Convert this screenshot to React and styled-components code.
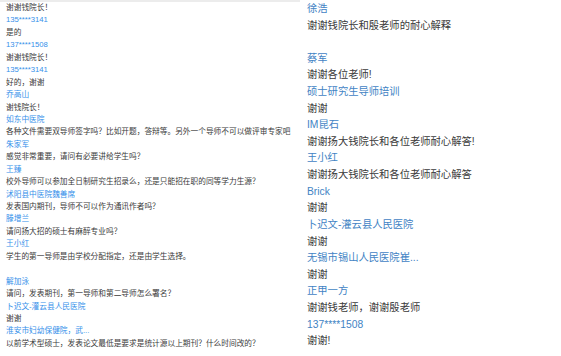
import React from "react"
import styled, { createGlobalStyle } from "styled-components"

const GlobalStyle = createGlobalStyle`
  html, body {
    margin: 0;
    padding: 0;
    background: #ffffff;
  }
  body {
    font-family: "Liberation Sans", "Noto Sans CJK SC", sans-serif;
  }
`

const Page = styled.div`
  display: flex;
  width: 561px;
  height: 356px;
  overflow: hidden;
`

const Column = styled.div`
  display: flex;
  flex-direction: column;
  box-sizing: border-box;
  width: ${(p) => p.$width};
  flex: ${(p) => (p.$width ? "none" : "1")};
  padding: ${(p) => p.$pad};
  border-top: ${(p) => (p.$bar ? "2px solid #ececec" : "none")};
  font-size: ${(p) => p.$size}px;
  line-height: ${(p) => p.$lh}px;
`

const Line = styled.div`
  white-space: nowrap;
  color: ${(p) => (p.$name ? p.$blue : "#3a3a3a")};
  height: ${(p) => p.$lh}px;
`

const Blank = styled.div`
  height: ${(p) => p.$h}px;
`

const left = [
  ["t", "谢谢钱院长！"],
  ["n", "135****3141"],
  ["t", "是的"],
  ["n", "137****1508"],
  ["t", "谢谢钱院长！"],
  ["n", "135****3141"],
  ["t", "好的，谢谢"],
  ["n", "乔高山"],
  ["t", "谢钱院长！"],
  ["n", "如东中医院"],
  ["t", "各种文件需要双导师签字吗？比如开题，答辩等。另外一个导师不可以做评审专家吧"],
  ["n", "朱家军"],
  ["t", "感觉非常重要，请问有必要讲给学生吗？"],
  ["n", "王臻"],
  ["t", "校外导师可以参加全日制研究生招录么，还是只能招在职的同等学力生源？"],
  ["n", "沭阳县中医院魏善席"],
  ["t", "发表国内期刊，导师不可以作为通讯作者吗？"],
  ["n", "滕增兰"],
  ["t", "请问扬大招的硕士有麻醉专业吗？"],
  ["n", "王小红"],
  ["t", "学生的第一导师是由学校分配指定，还是由学生选择。"],
  ["b", ""],
  ["n", "解加泳"],
  ["t", "请问，发表期刊，第一导师和第二导师怎么署名？"],
  ["n", " 卜迟文-灌云县人民医院"],
  ["t", "谢谢"],
  ["n", "淮安市妇幼保健院，武..."],
  ["t", "以前学术型硕士，发表论文最低是要求是统计源以上期刊？什么时间改的？"],
]

const right = [
  ["n", "徐浩"],
  ["t", "谢谢钱院长和殷老师的耐心解释"],
  ["b", ""],
  ["n", "蔡军"],
  ["t", "谢谢各位老师!"],
  ["n", "硕士研究生导师培训"],
  ["t", "谢谢"],
  ["n", "IM昆石"],
  ["t", "谢谢扬大钱院长和各位老师耐心解答!"],
  ["n", "王小红"],
  ["t", "谢谢扬大钱院长和各位老师耐心解答"],
  ["n", "Brick"],
  ["t", "谢谢"],
  ["n", " 卜迟文-灌云县人民医院"],
  ["t", "谢谢"],
  ["n", "无锡市锡山人民医院崔..."],
  ["t", "谢谢"],
  ["n", "正甲一方"],
  ["t", "谢谢钱老师，谢谢殷老师"],
  ["n", "137****1508"],
  ["t", "谢谢!"],
]

const Chat = ({ rows, lh, blue }) =>
  rows.map(([kind, text], i) =>
    kind === "b" ? (
      <Blank key={i} $h={lh} />
    ) : (
      <Line key={i} $name={kind === "n"} $blue={blue} $lh={lh}>
        {text}
      </Line>
    )
  )

const App = () => (
  <>
    <GlobalStyle />
    <Page>
      <Column $width="300px" $pad="0 0 0 6px" $bar $size={7.7} $lh={12.45}>
        <Chat rows={left} lh={12.45} blue="#3590ea" />
      </Column>
      <Column $pad="1px 0 0 7px" $size={10.3} $lh={16.62}>
        <Chat rows={right} lh={16.62} blue="#4283c4" />
      </Column>
    </Page>
  </>
)

export default App
